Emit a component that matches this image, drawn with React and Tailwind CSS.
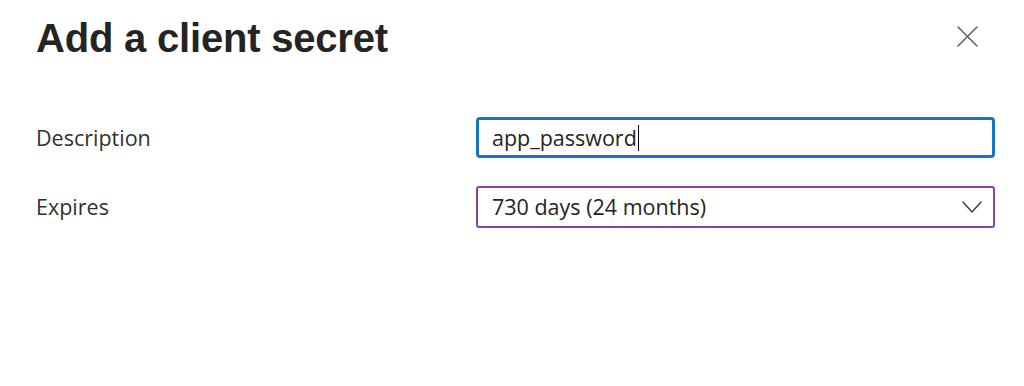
import { useState } from "react";

export default function App() {
  const [desc] = useState("app_password");

  return (
    <div className="w-[1024px] h-[386px] bg-white pl-[36px] pr-[29px] text-[#323130]" style={{ fontFamily: '"Open Sans", "Noto Sans", sans-serif' }}>
      <div className="flex justify-between items-start pt-[14px]">
        <h1 className="text-[40px] leading-[48px] font-bold tracking-[-0.2px] text-[#242424]" style={{ fontFamily: '"Liberation Sans", Arial, sans-serif' }}>
          Add a client secret
        </h1>
        <button className="mt-[12px] mr-[17px] w-[21px] h-[21px] text-[#616161]" aria-label="Close">
          <svg viewBox="0 0 21 21" width="21" height="21" fill="none" stroke="currentColor" strokeWidth="1.6" strokeLinecap="round">
            <path d="M1 1L20 20M20 1L1 20" />
          </svg>
        </button>
      </div>

      <div className="mt-[55px] grid grid-cols-[440px_1fr] items-center gap-y-[28px]">
        <label className="text-[21.5px] leading-[28px]">Description</label>
        <div className="h-[41px] border-[3px] border-[#1a73c4] rounded-[4px] flex items-center pl-[13px]">
          <span className="text-[21.5px] leading-[28px] text-[#242424]">{desc}</span>
          <span className="w-[1.5px] h-[26px] bg-black ml-[1px]"></span>
        </div>

        <label className="text-[21.5px] leading-[28px]">Expires</label>
        <div className="h-[42px] border-2 border-[#8a45a0] rounded-[3px] flex items-center justify-between pl-[14px] pr-[11px]">
          <span className="text-[21.5px] leading-[28px] text-[#242424]">730 days (24 months)</span>
          <svg viewBox="0 0 20 12" width="20" height="12" fill="none" stroke="#424242" strokeWidth="1.5" strokeLinecap="round" strokeLinejoin="round">
            <path d="M1 1L10 11L19 1" />
          </svg>
        </div>
      </div>
    </div>
  );
}
